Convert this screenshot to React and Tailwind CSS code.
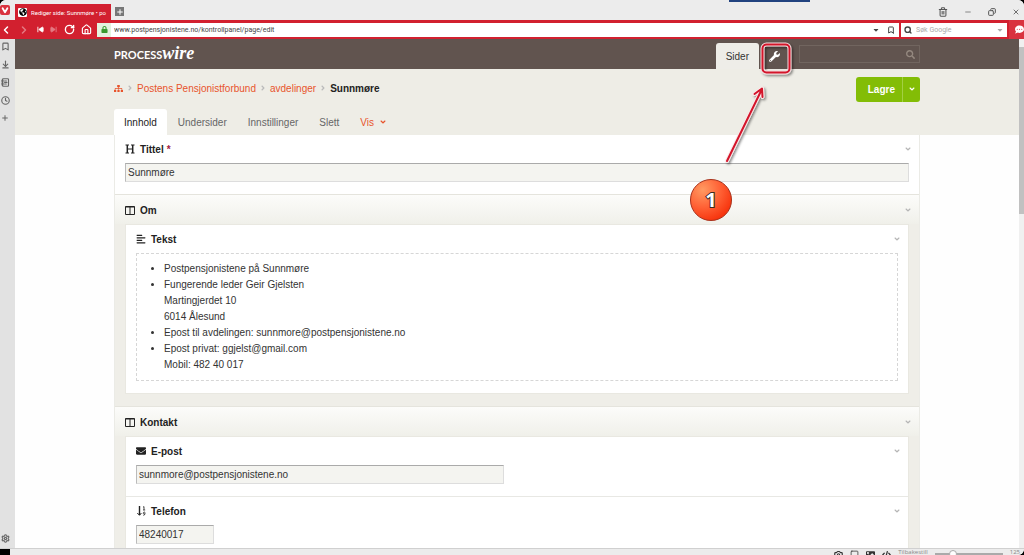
import React, { useState } from 'react';
import { ArrowDownToLine, Bookmark, Camera, ChevronLeft, ChevronRight, Clock, Copy, House, Minus, NotebookText, Plus, RotateCw, Search, Settings, SkipBack, SkipForward, Square, Trash2, X } from 'lucide-react';
import { FaAlignLeft, FaAngleDown, FaAngleRight, FaCaretDown, FaCode, FaCommentDots, FaEnvelope, FaGlobeAmericas, FaImage, FaLock, FaSearch, FaSitemap, FaWrench } from 'react-icons/fa';

const TABS = ['Innhold', 'Undersider', 'Innstillinger', 'Slett'];

const HeadingIcon = ({ className }) => (
    <svg viewBox="0 0 10 10" className={className} fill="none" stroke="currentColor">
        <path strokeWidth="1.5" d="M2.300 1V9M7.700 1V9" />
        <path strokeWidth="1" d="M2.300 5H7.700M.5 1H4M6 1H9.500M.5 9H4M6 9H9.500" />
    </svg>
);

const ColumnsIcon = ({ className }) => (
    <svg viewBox="0 0 10 10" className={className} fill="none" stroke="currentColor">
        <path d="M.5 1.500H9.500V9.500H.5ZM5 2V9.500" />
        <path d="M.5 2H9.500" />
    </svg>
);

const NumberIcon = ({ className }) => (
    <svg viewBox="0 0 10 10" className={className} fill="none" stroke="currentColor">
        <path strokeWidth="1.400" d="M3.500 0V9" />
        <path d="M1.300 7 3.500 9.300 5.400 7" />
        <path strokeWidth=".8" d="M7 1.200 8 .6V4M7 4H9.200M9 7.700A1 1 0 1 1 9 6.500V7.500Q9 9.200 7.300 9.400" />
    </svg>
);

const TitleBar = () => (
    <div className="flex h-5 shrink-0 items-end bg-[#ececec] text-[#555]">
        <button aria-label="Vivaldi" className="mb-[5px] flex h-[10px] w-[10px] items-center justify-center rounded-[2px] bg-[#d9333f] text-white">
            <svg viewBox="0 0 10 10" className="h-[10px] w-[10px]" fill="none" stroke="currentColor" strokeWidth="1.8" strokeLinecap="round" strokeLinejoin="round">
                <path d="M2.6 3.2 5 7.2 7.4 3.2" />
            </svg>
        </button>
        <div className="ml-[5px] flex h-4 w-24 items-center gap-1 bg-[#d2202f] pl-[3px] text-white">
            <span className="flex h-[9px] w-[9px] shrink-0 items-center justify-center rounded-[1px] bg-white">
                <FaGlobeAmericas className="h-2 w-2 text-black" />
            </span>
            <span className="whitespace-nowrap font-[Roboto,sans-serif] text-[6px]">Rediger side: Sunnmøre • po</span>
        </div>
        <button aria-label="Ny fane" className="mb-1 ml-1 flex h-[9px] w-[9px] items-center justify-center bg-[#777] text-white">
            <Plus className="h-2 w-2" strokeWidth={3} />
        </button>
        <div className="mb-[3px] ml-auto flex items-center gap-4 pr-1">
            <button aria-label="Papirkurv"><Trash2 className="h-[10px] w-[10px]" strokeWidth={2.5} /></button>
            <button aria-label="Minimer"><Minus className="h-2 w-2" /></button>
            <button aria-label="Gjenopprett"><Copy className="h-2 w-2 -scale-x-100" strokeWidth={3} /></button>
            <button aria-label="Lukk"><X className="h-2 w-2" strokeWidth={2.5} /></button>
        </div>
    </div>
);

const AddressBar = () => (
    <div className="flex h-[19px] shrink-0 items-center bg-[#d2202f] text-white">
        <div className="flex w-[97px] items-center justify-between pr-[5px]">
            <button aria-label="Tilbake"><ChevronLeft className="h-3 w-3" strokeWidth={3} /></button>
            <button aria-label="Fremover" className="opacity-40"><ChevronRight className="h-3 w-3" strokeWidth={3} /></button>
            <button aria-label="Spol tilbake"><SkipBack className="h-[7px] w-[7px]" fill="currentColor" strokeWidth={3} /></button>
            <button aria-label="Spol fremover" className="opacity-40"><SkipForward className="h-[7px] w-[7px]" fill="currentColor" strokeWidth={3} /></button>
            <button aria-label="Last inn på nytt"><RotateCw className="h-[11px] w-[11px]" strokeWidth={3} /></button>
            <button aria-label="Hjem"><House className="h-[11px] w-[11px]" strokeWidth={2.5} /></button>
        </div>
        <div className="flex h-[14px] min-w-0 flex-1 items-center bg-white text-[#444]">
            <span className="flex h-full w-[14px] items-center justify-center bg-[#e3f3df]">
                <FaLock className="h-[7px] w-[7px] text-[#3a9b2f]" />
            </span>
            <input aria-label="Adresse" defaultValue="www.postpensjonistene.no/kontrollpanel/page/edit" className="h-full min-w-0 flex-1 px-[3px] font-[Roboto,sans-serif] text-[7px] outline-none" />
            <FaCaretDown className="mr-[7px] h-2 w-2" />
            <Bookmark className="mr-1 h-2 w-2" strokeWidth={3} />
        </div>
        <div className="ml-[2px] flex h-[14px] w-[106px] items-center bg-white px-[3px] text-[#444]">
            <Search className="h-2 w-2 shrink-0" strokeWidth={4} />
            <input aria-label="Søk" placeholder="Søk Google" className="h-full min-w-0 flex-1 px-1 font-[Roboto,sans-serif] text-[7px] outline-none placeholder:text-[#aaa]" />
            <FaCaretDown className="h-2 w-2 text-[#aaa]" />
        </div>
        <button aria-label="Meldinger" className="ml-[2px] flex h-full w-[15px] items-center justify-end bg-[#d9333f]">
            <FaCommentDots className="h-[9px] w-[9px]" />
        </button>
    </div>
);

const SidePanel = () => (
    <div className="flex w-[15px] shrink-0 flex-col items-start gap-[9px] bg-[#e2e2e2] pt-[3px] pb-[5px] pl-px text-[#666]">
        <button aria-label="Bokmerker"><Bookmark className="h-[9px] w-[9px]" strokeWidth={3} /></button>
        <button aria-label="Nedlastinger"><ArrowDownToLine className="h-[9px] w-[9px]" strokeWidth={3} /></button>
        <button aria-label="Notater"><NotebookText className="h-[9px] w-[9px]" strokeWidth={3} /></button>
        <button aria-label="Logg"><Clock className="h-[9px] w-[9px]" strokeWidth={3} /></button>
        <button aria-label="Legg til"><Plus className="h-2 w-2" strokeWidth={3} /></button>
        <button aria-label="Innstillinger" className="mt-auto"><Settings className="h-[9px] w-[9px]" strokeWidth={3} /></button>
    </div>
);

const StatusBar = () => (
    <div className="flex h-[7px] shrink-0 items-start border-t border-[#d0d0d0] bg-[#ececec] text-[#333]">
        <span className="h-[6px] w-[10px] bg-black" />
        <div className="ml-auto flex h-[6px] items-start gap-[7px] overflow-hidden pr-1">
            <Camera className="mt-px h-[9px] w-[9px]" strokeWidth={3} />
            <Square className="mt-px h-[9px] w-[9px]" />
            <FaImage className="mt-px h-[9px] w-[9px]" />
            <FaCode className="mt-px h-[9px] w-[9px]" />
            <span className="text-[6px] leading-[6px] text-[#888]">Tilbakestill</span>
            <input type="range" aria-label="Zoom" min="20" max="150" defaultValue="50" className="h-[9px] w-[68px] appearance-none bg-transparent [&::-webkit-slider-runnable-track]:h-[2px] [&::-webkit-slider-runnable-track]:bg-[#aaa] [&::-webkit-slider-thumb]:-mt-[3px] [&::-webkit-slider-thumb]:h-2 [&::-webkit-slider-thumb]:w-2 [&::-webkit-slider-thumb]:appearance-none [&::-webkit-slider-thumb]:rounded-full [&::-webkit-slider-thumb]:border [&::-webkit-slider-thumb]:border-[#aaa] [&::-webkit-slider-thumb]:bg-white" />
            <span className="text-[6px] leading-[6px] text-[#888]">125</span>
        </div>
    </div>
);

const Masthead = () => (
    <header className="bg-[#61544f] px-4">
        <div className="mx-auto flex h-[30px] max-w-[806px] items-center">
            <a href="#home" aria-label="ProcessWire" className="flex items-baseline text-white">
                <span className="font-[Lato,sans-serif] text-[11px] font-bold">PROCESS</span>
                <span className="font-['Liberation_Serif',serif] text-[18px] leading-none font-bold italic">wire</span>
            </a>
            <nav className="ml-auto flex self-end">
                <a href="#sider" className="flex h-[26px] items-center rounded-t-[3px] bg-[#eeede8] px-[10px] text-[#333]">Sider</a>
                <a href="#oppsett" aria-label="Oppsett" className="flex h-[26px] w-[30px] items-center justify-center text-white">
                    <FaWrench className="h-[11px] w-[11px]" />
                </a>
            </nav>
            <div className="ml-[10px] flex h-[18px] w-[121px] items-center border border-[#71655f] px-1 text-[#94887f]">
                <input aria-label="Søk i kontrollpanel" className="h-full min-w-0 flex-1 outline-none" />
                <FaSearch className="h-[9px] w-[9px]" />
            </div>
        </div>
    </header>
);

const PageHeader = () => {
    const [active, setActive] = useState('Innhold');

    return (
        <div className="bg-[#eeede6] px-4">
            <div className="mx-auto max-w-[806px]">
                <div className="flex h-10 items-center justify-between">
                    <nav className="flex items-center gap-[5px] pb-[2px] text-[#e8542c]">
                        <a href="#tree" aria-label="Sidetre"><FaSitemap className="h-[9px] w-[9px]" /></a>
                        <FaAngleRight className="h-2 w-1 text-[#bbb]" />
                        <a href="#forbund">Postens Pensjonistforbund</a>
                        <FaAngleRight className="h-2 w-1 text-[#bbb]" />
                        <a href="#avdelinger">avdelinger</a>
                        <FaAngleRight className="h-2 w-1 text-[#bbb]" />
                        <strong className="text-[#222]">Sunnmøre</strong>
                    </nav>
                    <div className="flex h-[25px] overflow-hidden rounded-[3px] bg-[#83bd06] font-bold text-white">
                        <button className="pr-[7px] pl-3">Lagre</button>
                        <button aria-label="Flere valg" className="flex w-[18px] items-center justify-center border-l border-[#a3d043]">
                            <FaAngleDown className="h-2 w-2" />
                        </button>
                    </div>
                </div>
                <div className="flex h-[26px] gap-px text-[#666]">
                    {TABS.map((tab) => (
                        <button key={tab} onClick={() => setActive(tab)} className={`px-[10px] ${active === tab ? 'rounded-t-[3px] bg-white text-[#222]' : ''}`}>
                            {tab}
                        </button>
                    ))}
                    <button className="flex items-center gap-[5px] px-[10px] text-[#e8542c]">
                        Vis <FaAngleDown className="h-2 w-2" />
                    </button>
                </div>
            </div>
        </div>
    );
};

const FieldHeader = ({ icon: Icon, label, htmlFor, required }) => (
    <div className="flex h-7 items-center gap-[5px] font-bold text-[#222]">
        <Icon className="h-[10px] w-[10px]" />
        <label htmlFor={htmlFor}>
            {label}
            {required && <span className="ml-[3px] text-[#a3213f]">*</span>}
        </label>
        <button aria-label={`Skjul ${label}`} className="ml-auto -mr-[3px] text-[#b5b5b5]"><FaAngleDown className="h-2 w-2" /></button>
    </div>
);

const TextField = ({ id, icon, label, value, width, required }) => (
    <div className="px-[10px] pb-3">
        <FieldHeader icon={icon} label={label} htmlFor={id} required={required} />
        <input id={id} defaultValue={value} className={`block h-[19px] border border-[#ddd] border-t-[#aaa] border-l-[#bbb] bg-[#f4f4f0] px-[2px] text-[#333] outline-none ${width}`} />
    </div>
);

const Fieldset = ({ label, children }) => (
    <section className="border-t border-[#e5e4dd] bg-[#efeee8] pb-3">
        <div className="bg-linear-to-b from-[#fcfcfa] to-[#f0f0ea] px-[10px] pt-px">
            <FieldHeader icon={ColumnsIcon} label={label} />
        </div>
        <div className="mx-[10px] border border-[#e9e8e1] bg-white">{children}</div>
    </section>
);

const Editor = () => (
    <main className="mx-auto max-w-[806px] border-x border-[#ebebe6] bg-white">
        <TextField id="title" icon={HeadingIcon} label="Tittel" value="Sunnmøre" width="w-full" required />
        <Fieldset label="Om">
            <div className="px-[10px] pb-3">
                <FieldHeader icon={FaAlignLeft} label="Tekst" />
                <div className="border border-dashed border-[#d6d6d6] py-[7px] pl-[27px] text-[#333]">
                    <ul className="list-disc leading-4">
                        <li>Postpensjonistene på Sunnmøre</li>
                        <li>Fungerende leder Geir Gjelsten<br />Martingjerdet 10<br />6014 Ålesund</li>
                        <li>Epost til avdelingen: sunnmore@postpensjonistene.no</li>
                        <li>Epost privat: ggjelst@gmail.com<br />Mobil: 482 40 017</li>
                    </ul>
                </div>
            </div>
        </Fieldset>
        <Fieldset label="Kontakt">
            <TextField id="email" icon={FaEnvelope} label="E-post" value="sunnmore@postpensjonistene.no" width="w-[368px]" />
            <div className="border-t border-[#e8e8e4]">
                <TextField id="phone" icon={NumberIcon} label="Telefon" value="48240017" width="w-[78px]" />
            </div>
        </Fieldset>
    </main>
);

// Step marker: frame round the wrench, arrow and numbered ball
const StepMarker = () => (
    <svg viewBox="0 0 120 200" className="pointer-events-none absolute top-0 right-[120px] h-[200px] w-[120px]" fill="none">
        <defs>
            <radialGradient id="ball" cx="0.3" cy="0.25" r="0.85">
                <stop offset="0" stopColor="#ff9a62" />
                <stop offset="0.5" stopColor="#ff6236" />
                <stop offset="1" stopColor="#f52c06" />
            </radialGradient>
            <filter id="shade" x="-20%" y="-20%" width="150%" height="150%">
                <feDropShadow dx="1.5" dy="1.5" stdDeviation="1" floodOpacity="0.45" />
            </filter>
        </defs>
        <g filter="url(#shade)">
            <rect x="82.5" y="5.500" width="27" height="28" rx="4" stroke="#f3dede" strokeWidth="4" />
            <rect x="82.5" y="5.500" width="27" height="28" rx="4" stroke="#d3132b" strokeWidth="2" />
        </g>
        <g filter="url(#shade)" strokeLinecap="round" strokeLinejoin="round">
            <path d="M47 122 82 50M74.5 55 82 49.500 82.500 58" stroke="#fbeaea" strokeWidth="4" />
            <path d="M47 122 82 50M74.5 55 82 49.500 82.500 58" stroke="#d3132b" strokeWidth="2" />
        </g>
        <circle cx="31" cy="161" r="20.500" fill="url(#ball)" stroke="#a8321c" strokeWidth="1" />
        <text x="31" y="168" textAnchor="middle" fontFamily="Open Sans, sans-serif" fontSize="20" fontWeight="700" fill="#fff" stroke="#3b2a20" strokeWidth="2" paintOrder="stroke">1</text>
    </svg>
);

const App = () => (
    <div className="h-screen bg-black">
        <div className="relative flex h-full flex-col overflow-hidden rounded-t-[6px] rounded-br-[6px] bg-white font-['Open_Sans',sans-serif]">
            <div className="absolute top-0 right-[214px] h-[2px] w-[81px] bg-[#21427f]" />
            <TitleBar />
            <AddressBar />
            <div className="flex min-h-0 flex-1">
                <SidePanel />
                <div className="min-w-0 flex-1 overflow-hidden bg-[#fefefe] font-['Liberation_Sans',sans-serif] text-[10px]">
                    <Masthead />
                    <PageHeader />
                    <Editor />
                </div>
                <div className="w-[5px] shrink-0 bg-[#f0f0f0] pt-2">
                    <div className="h-1/3 bg-[#c1c1c1]" />
                </div>
            </div>
            <StatusBar />
        </div>
        <div className="pointer-events-none absolute inset-x-0 top-[39px] pr-[5px] pl-[15px]">
            <div className="relative mx-auto max-w-[806px]">
                <StepMarker />
            </div>
        </div>
    </div>
);

export default App;
